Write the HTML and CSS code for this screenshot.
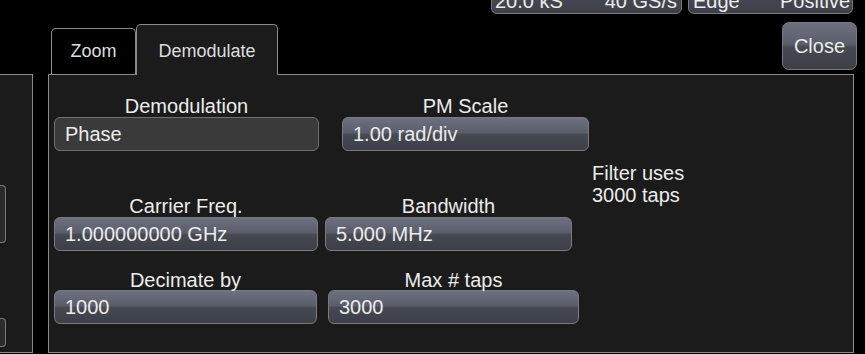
FILE: index.html
```html
<!DOCTYPE html>
<html lang="en">

<head>
  <meta charset="UTF-8" />
  <title>Demodulate</title>
  <link rel="stylesheet" href="styles.css">
</head>

<body>
  <div class="status">
    <div class="chip chip-time"><span>20.0 kS</span><span>40 GS/s</span></div>
    <div class="chip chip-trig"><span>Edge</span><span>Positive</span></div>
  </div>

  <div class="tabrow">
    <div class="tab">Zoom</div>
    <div class="tab active">Demodulate</div>
    <div class="close">Close</div>
  </div>

  <div class="main">
    <div class="side">
      <div class="stub stub-a"></div>
      <div class="stub stub-b"></div>
    </div>
    <div class="panel">
      <div class="field f-mode">
        <div class="label">Demodulation</div>
        <div class="box flat">Phase</div>
      </div>
      <div class="field f-scale">
        <div class="label">PM Scale</div>
        <div class="box">1.00 rad/div</div>
      </div>
      <div class="note">Filter uses<br>3000 taps</div>
      <div class="field f-carrier">
        <div class="label">Carrier Freq.</div>
        <div class="box">1.000000000 GHz</div>
      </div>
      <div class="field f-bw">
        <div class="label">Bandwidth</div>
        <div class="box">5.000 MHz</div>
      </div>
      <div class="field f-dec">
        <div class="label tight">Decimate by</div>
        <div class="box">1000</div>
      </div>
      <div class="field f-taps">
        <div class="label tight">Max # taps</div>
        <div class="box">3000</div>
      </div>
    </div>
  </div>
</body>

</html>
```

FILE: styles.css
```css
body {
  margin: 0;
  width: 865px;
  height: 354px;
  overflow: hidden;
  background: #000;
  color: #ececec;
  font-family: "Liberation Sans", Arial, sans-serif;
  font-size: 20px;
}

/* shared button look */
.chip, .close, .box {
  box-sizing: border-box;
  border: 1px solid #7a7a7a;
  background: linear-gradient(#6c7080, #5a5e6b 46%, #464952 52%, #3c3f47);
}

/* clipped status chips along the top */
.status { height: 14px; display: flex; justify-content: flex-end; gap: 6px; padding-right: 12px; }
.chip {
  display: flex;
  justify-content: space-between;
  height: 36px;
  margin-top: -22px;
  padding: 10px 4px 0 3px;
  line-height: 24px;
  border-radius: 6px;
}
.chip-time { width: 191px; }
.chip-trig { width: 165px; padding-left: 4px; padding-right: 2px; }

/* tabs + close */
.tabrow { height: 60px; display: flex; align-items: flex-end; padding-left: 51px; padding-right: 8px; }
.tab {
  box-sizing: border-box;
  width: 85px;
  height: 46px;
  padding-top: 12px;
  border: 1px solid #8a8a8a;
  border-bottom: 0;
  border-radius: 5px 5px 0 0;
  font-size: 18px;
  line-height: 20px;
  text-align: center;
  color: #dedede;
}
.tab.active {
  position: relative;
  z-index: 1;
  width: 142px;
  height: 51px;
  margin-bottom: -1px;
  padding-top: 16px;
  background: #1b1b1b;
}
.close {
  align-self: flex-start;
  margin-left: auto;
  margin-top: 8px;
  width: 75px;
  height: 48px;
  border-radius: 7px;
  line-height: 46px;
  text-align: center;
}

/* body of the dialog */
.main { display: flex; gap: 15px; height: 280px; }
.side {
  box-sizing: border-box;
  width: 33px;
  height: 279px;
  border: 1px solid #8a8a8a;
  border-left: 0;
  background: #1b1b1b;
}
.stub {
  width: 5px;
  border: 1px solid #7a7a7a;
  border-left: 0;
  border-radius: 0 4px 4px 0;
  background: #2c2c2c;
  margin-left: 0;
}
.stub-a { margin-top: 110px; height: 56px; }
.stub-b { margin-top: 75px; height: 27px; }

.panel {
  box-sizing: border-box;
  width: 806px;
  height: 279px;
  border: 1px solid #8a8a8a;
  background: #1b1b1b;
  padding-top: 21px;
  display: grid;
  grid-template-columns: 270px 271px 1fr;
  align-content: start;
}

.label { height: 20px; line-height: 20px; margin-bottom: 1px; text-align: center; white-space: nowrap; }
.label.tight { margin-bottom: 0; }
.box {
  height: 34px;
  padding-left: 10px;
  line-height: 32px;
  border-radius: 6px;
  white-space: nowrap;
}
.box.flat { background: #3a3a3a; border-color: #707070; }

.f-mode { grid-column: 1; grid-row: 1; margin-left: 5px; width: 265px; }
.f-scale { grid-column: 2; grid-row: 1; margin-left: 23px; width: 247px; }
.f-carrier { grid-column: 1; grid-row: 2; margin: 45px 0 0 5px; width: 264px; }
.f-bw { grid-column: 2; grid-row: 2; margin: 45px 0 0 6px; width: 247px; }
.f-dec { grid-column: 1; grid-row: 3; margin: 19px 0 0 5px; width: 263px; }
.f-taps { grid-column: 2; grid-row: 3; margin: 19px 0 0 9px; width: 251px; }

.note { grid-column: 3; grid-row: 1 / 3; margin: 66px 0 0 2px; line-height: 22px; }
```
